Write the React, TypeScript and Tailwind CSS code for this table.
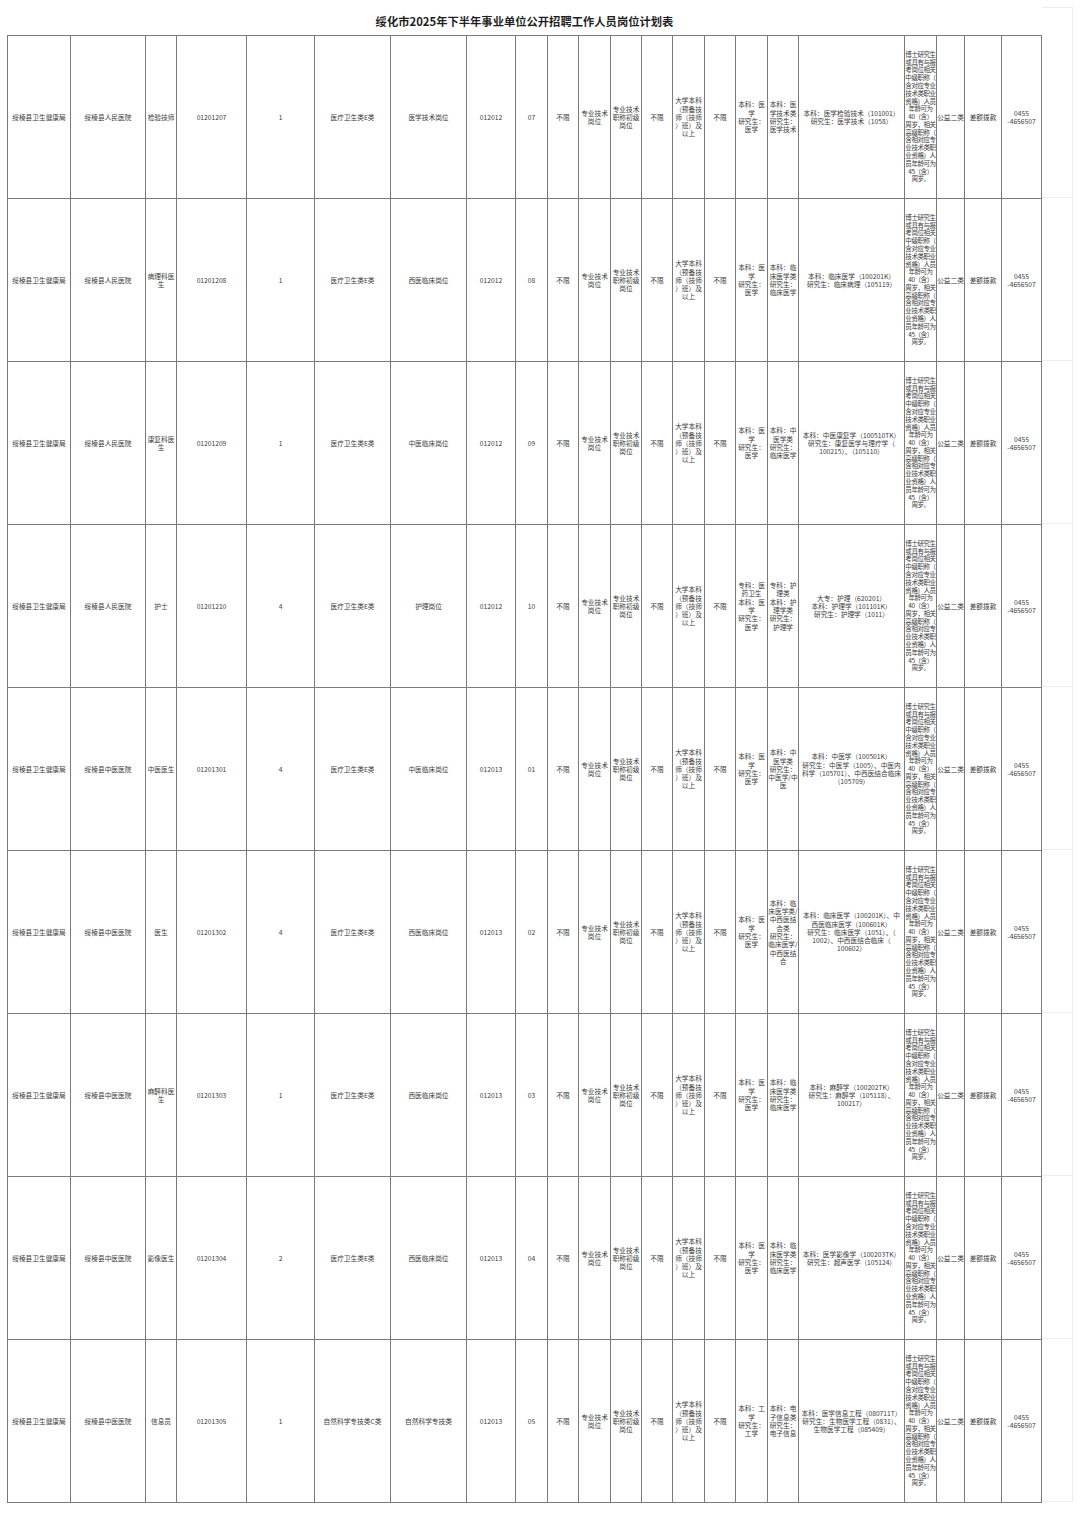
const widths = [63, 75, 31, 70, 68, 76, 76, 49, 32, 31, 32, 31, 31, 32, 31, 32, 31, 106, 32, 28, 37, 40];

const note =
  "博士研究生\n或具有与报\n考岗位相关\n中级职称（\n含对应专业\n技术类职业\n资格）人员\n年龄可为\n40（含）\n周岁，相关\n高级职称（\n含相对应专\n业技术类职\n业资格）人\n员年龄可为\n45（含）\n周岁。";

const rows = [
  {
    unit: "绥棱县人民医院",
    post: "检验技师",
    code: "01201207",
    num: "1",
    kind: "医疗卫生类E类",
    type: "医学技术岗位",
    exam: "012012",
    seq: "07",
    degree: "本科：医\n学\n研究生：\n医学",
    cls: "本科：医\n学技术类\n研究生：\n医学技术",
    major: "本科：医学检验技术（101001）\n研究生：医学技术（1058）",
  },
  {
    unit: "绥棱县人民医院",
    post: "病理科医\n生",
    code: "01201208",
    num: "1",
    kind: "医疗卫生类E类",
    type: "西医临床岗位",
    exam: "012012",
    seq: "08",
    degree: "本科：医\n学\n研究生：\n医学",
    cls: "本科：临\n床医学类\n研究生：\n临床医学",
    major: "本科：临床医学（100201K）\n研究生：临床病理（105119）",
  },
  {
    unit: "绥棱县人民医院",
    post: "康复科医\n生",
    code: "01201209",
    num: "1",
    kind: "医疗卫生类E类",
    type: "中医临床岗位",
    exam: "012012",
    seq: "09",
    degree: "本科：医\n学\n研究生：\n医学",
    cls: "本科：中\n医学类\n研究生：\n临床医学",
    major: "本科：中医康复学（100510TK）\n研究生：康复医学与理疗学（\n100215）、（105110）",
  },
  {
    unit: "绥棱县人民医院",
    post: "护士",
    code: "01201210",
    num: "4",
    kind: "医疗卫生类E类",
    type: "护理岗位",
    exam: "012012",
    seq: "10",
    degree: "专科：医\n药卫生\n本科：医\n学\n研究生：\n医学",
    cls: "专科：护\n理类\n本科：护\n理学类\n研究生：\n护理学",
    major: "大专：护理（620201）\n本科：护理学（101101K）\n研究生：护理学（1011）",
  },
  {
    unit: "绥棱县中医医院",
    post: "中医医生",
    code: "01201301",
    num: "4",
    kind: "医疗卫生类E类",
    type: "中医临床岗位",
    exam: "012013",
    seq: "01",
    degree: "本科：医\n学\n研究生：\n医学",
    cls: "本科：中\n医学类\n研究生：\n中医学/中\n医",
    major: "本科：中医学（100501K）\n研究生：中医学（1005）、中医内\n科学（105701）、中西医结合临床\n（105709）",
  },
  {
    unit: "绥棱县中医医院",
    post: "医生",
    code: "01201302",
    num: "4",
    kind: "医疗卫生类E类",
    type: "西医临床岗位",
    exam: "012013",
    seq: "02",
    degree: "本科：医\n学\n研究生：\n医学",
    cls: "本科：临\n床医学类/\n中西医结\n合类\n研究生：\n临床医学/\n中西医结\n合",
    major: "本科：临床医学（100201K）、中\n西医临床医学（100601K）\n研究生：临床医学（1051）、（\n1002）、中西医结合临床（\n100602）",
  },
  {
    unit: "绥棱县中医医院",
    post: "麻醉科医\n生",
    code: "01201303",
    num: "1",
    kind: "医疗卫生类E类",
    type: "西医临床岗位",
    exam: "012013",
    seq: "03",
    degree: "本科：医\n学\n研究生：\n医学",
    cls: "本科：临\n床医学类\n研究生：\n临床医学",
    major: "本科：麻醉学（100202TK）\n研究生：麻醉学（105118）、\n100217）",
  },
  {
    unit: "绥棱县中医医院",
    post: "影像医生",
    code: "01201304",
    num: "2",
    kind: "医疗卫生类E类",
    type: "西医临床岗位",
    exam: "012013",
    seq: "04",
    degree: "本科：医\n学\n研究生：\n医学",
    cls: "本科：临\n床医学类\n研究生：\n临床医学",
    major: "本科：医学影像学（100203TK）\n研究生：超声医学（105124）",
  },
  {
    unit: "绥棱县中医医院",
    post: "信息员",
    code: "01201305",
    num: "1",
    kind: "自然科学专技类C类",
    type: "自然科学专技类",
    exam: "012013",
    seq: "05",
    degree: "本科：工\n学\n研究生：\n工学",
    cls: "本科：电\n子信息类\n研究生：\n电子信息",
    major: "本科：医学信息工程（080711T）\n研究生：生物医学工程（0831）、\n生物医学工程（085409）",
  },
];

function cellsOf(r: (typeof rows)[number]) {
  return [
    "绥棱县卫生健康局",
    r.unit,
    r.post,
    r.code,
    r.num,
    r.kind,
    r.type,
    r.exam,
    r.seq,
    "不限",
    "专业技术\n岗位",
    "专业技术\n职称初级\n岗位",
    "不限",
    "大学本科\n（预备技\n师（技师\n）班）及\n以上",
    "不限",
    r.degree,
    r.cls,
    r.major,
    note,
    "公益二类",
    "差额拨款",
    "0455\n-4656507",
  ];
}

export default function App() {
  return (
    <div className="w-[1080px] h-[1522px] bg-white pt-[7px] pl-[7px] font-['Noto_Sans_CJK_SC',sans-serif] text-[#3a3a3a]">
      <div className="flex">
        <div className="w-[1035px] h-[28px] flex items-center justify-center text-[11.3px] font-bold text-[#1f1f1f]">
          绥化市2025年下半年事业单位公开招聘工作人员岗位计划表
        </div>
        <div className="w-[31px] h-[28px] border-t border-r border-[#ededed]" />
      </div>
      <div className="flex">
        <div className="flex flex-col border-l border-t border-[#7a7a7a]">
          {rows.map((r, ri) => (
            <div key={ri} className="flex h-[163px]">
              {cellsOf(r).map((c, ci) => (
                <div
                  key={ci}
                  style={{ width: widths[ci] }}
                  className={`shrink-0 flex items-center justify-center text-center whitespace-pre overflow-hidden border-r border-b border-[#7a7a7a] ${
                    ci === 18
                      ? "text-[6.5px] leading-[7.8px] tracking-[-0.45px]"
                      : "text-[6.7px] leading-[8.3px]"
                  }`}
                >
                  {c}
                </div>
              ))}
            </div>
          ))}
        </div>
        <div className="flex flex-col">
          {rows.map((_, i) => (
            <div key={i} className="w-[31px] h-[163px] border-r border-b border-[#ededed]" />
          ))}
        </div>
      </div>
    </div>
  );
}
